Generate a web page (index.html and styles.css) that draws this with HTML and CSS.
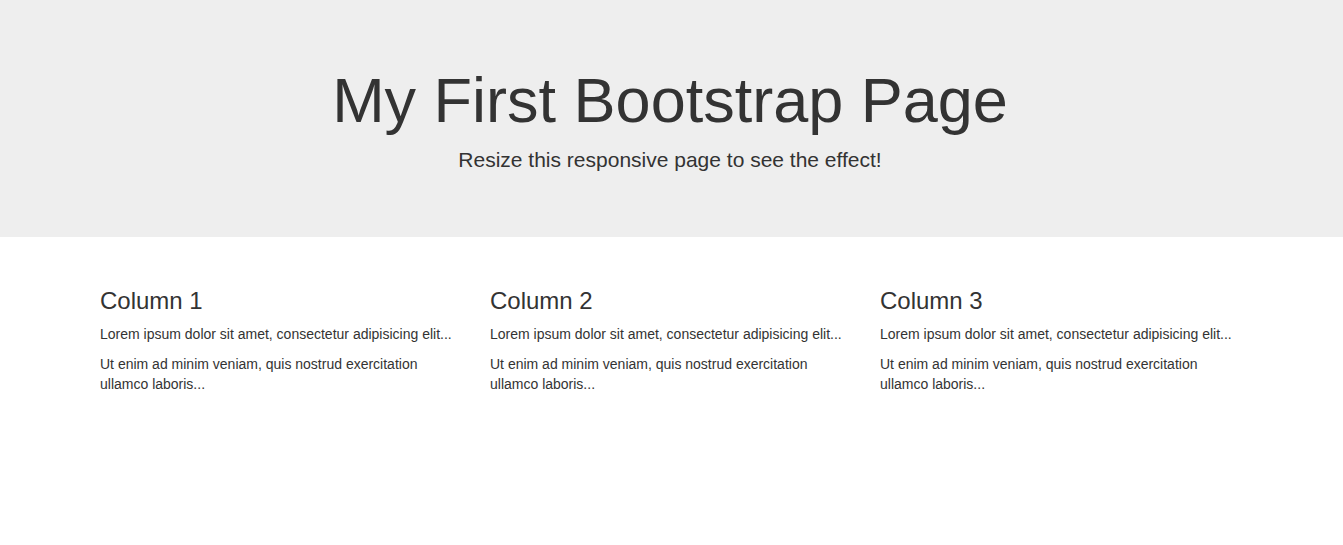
FILE: index.html
```html
<!DOCTYPE html>
<html lang="en">
<head>
<meta charset="utf-8">
<title>My First Bootstrap Page</title>
<link rel="stylesheet" href="styles.css">
</head>
<body>
<div class="jumbotron">
  <div class="container center">
    <h1 class="title">My First Bootstrap Page</h1>
    <p class="lead">Resize this responsive page to see the effect!</p>
  </div>
</div>
<div class="main">
  <div class="container">
    <div class="row">
      <div class="col">
        <h3 class="col-title">Column 1</h3>
        <p class="text">Lorem ipsum dolor sit amet, consectetur adipisicing elit...</p>
        <p class="text">Ut enim ad minim veniam, quis nostrud exercitation ullamco laboris...</p>
      </div>
      <div class="col">
        <h3 class="col-title">Column 2</h3>
        <p class="text">Lorem ipsum dolor sit amet, consectetur adipisicing elit...</p>
        <p class="text">Ut enim ad minim veniam, quis nostrud exercitation ullamco laboris...</p>
      </div>
      <div class="col">
        <h3 class="col-title">Column 3</h3>
        <p class="text">Lorem ipsum dolor sit amet, consectetur adipisicing elit...</p>
        <p class="text">Ut enim ad minim veniam, quis nostrud exercitation ullamco laboris...</p>
      </div>
    </div>
  </div>
</div>
</body>
</html>
```
FILE: styles.css
```css
* { box-sizing: border-box; }
html, body { margin: 0; padding: 0; }
body {
  font-family: "Liberation Sans", Arial, Helvetica, sans-serif;
  font-size: 14px;
  line-height: 1.42857143;
  color: #333;
  background: #fff;
}
.container {
  width: 1170px;
  margin: 0 auto;
  padding: 0 15px;
}
.center { text-align: center; }
.jumbotron {
  background: #eee;
  padding: 46px 3px 47px 0;
  margin-bottom: 31px;
}
.main { padding-right: 3px; }
.title {
  font-size: 63px;
  font-weight: 500;
  line-height: 1.1;
  margin: 20px 0 10px;
}
.lead {
  font-size: 21px;
  line-height: 1.42857143;
  margin: 0 0 15px;
}
.row {
  display: flex;
  margin: 0 -15px;
}
.col {
  width: 33.33333333%;
  padding: 0 15px;
}
.col-title {
  font-size: 24px;
  font-weight: 500;
  line-height: 1.1;
  margin: 20px 0 9px;
}
.text { margin: 0 0 10px; }
```
